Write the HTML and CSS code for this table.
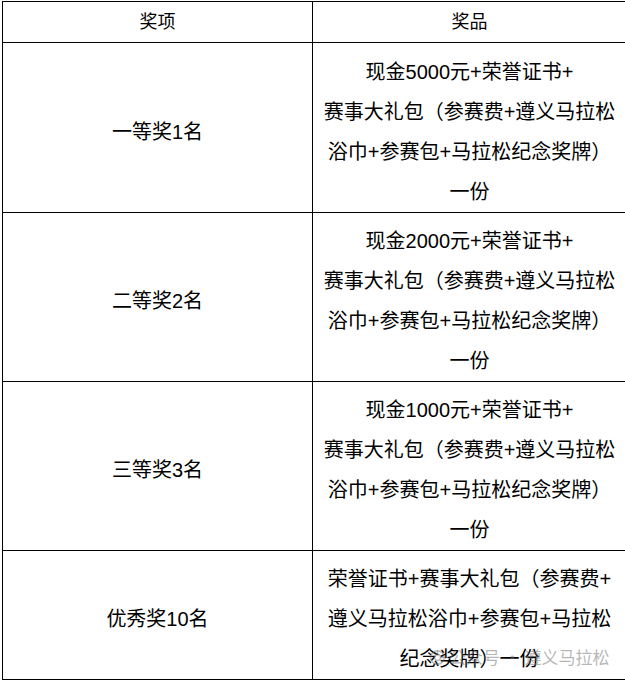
FILE: index.html
```html
<!DOCTYPE html>
<html lang="zh">
<head>
<meta charset="utf-8">
<link rel="stylesheet" href="styles.css">
</head>
<body>
<div class="page">
  <table class="prize">
    <colgroup><col class="c-left"><col class="c-right"></colgroup>
    <thead>
      <tr class="r-head"><th>奖项</th><th>奖品</th></tr>
    </thead>
    <tbody>
      <tr class="r-1">
        <td class="name">一等奖1名</td>
        <td class="gift">现金5000元+荣誉证书+<br>赛事大礼包（参赛费+遵义马拉松<br>浴巾+参赛包+马拉松纪念奖牌）<br>一份</td>
      </tr>
      <tr class="r-2">
        <td class="name">二等奖2名</td>
        <td class="gift">现金2000元+荣誉证书+<br>赛事大礼包（参赛费+遵义马拉松<br>浴巾+参赛包+马拉松纪念奖牌）<br>一份</td>
      </tr>
      <tr class="r-3">
        <td class="name">三等奖3名</td>
        <td class="gift">现金1000元+荣誉证书+<br>赛事大礼包（参赛费+遵义马拉松<br>浴巾+参赛包+马拉松纪念奖牌）<br>一份</td>
      </tr>
      <tr class="r-4">
        <td class="name">优秀奖10名</td>
        <td class="gift">荣誉证书+赛事大礼包（参赛费+<br>遵义马拉松浴巾+参赛包+马拉松<br>纪念奖牌）一份</td>
      </tr>
    </tbody>
  </table>
  <div class="watermark">
    <svg class="wm-icon" width="15" height="15" viewBox="0 0 16 16">
      <circle cx="8" cy="8" r="7.2" fill="none" stroke="currentColor" stroke-width="1.4"/>
      <circle cx="8" cy="8" r="3.2" fill="none" stroke="currentColor" stroke-width="1.4"/>
      <path d="M8 0.8 V4.8 M15.2 8 H11.2" stroke="currentColor" stroke-width="1.4"/>
    </svg>
    <span>公众号 · 遵义马拉松</span>
  </div>
</div>
</body>
</html>
```

FILE: styles.css
```css
html, body {
  margin: 0;
  padding: 0;
  background: #ffffff;
  overflow: hidden;
}
body {
  width: 625px;
  height: 680px;
  font-family: "Liberation Sans", "Noto Sans CJK SC", sans-serif;
  color: #000000;
}
.page {
  position: relative;
  width: 625px;
  height: 680px;
  padding: 1px 0 0 2px;
  box-sizing: border-box;
}
.prize {
  border-collapse: collapse;
  table-layout: fixed;
  width: 624px;
}
.c-left { width: 310px; }
.c-right { width: 314px; }
.prize th, .prize td {
  border: 1px solid #000000;
  text-align: center;
  vertical-align: middle;
  padding: 0;
}
.prize th {
  font-weight: normal;
  font-size: 18px;
  line-height: 24px;
}
.r-head { height: 41px; }
.r-1 { height: 170px; }
.r-2 { height: 168px; }
.r-3 { height: 169px; }
.r-4 { height: 127px; }
.prize td {
  font-size: 20px;
  line-height: 40px;
  padding-top: 8px;
  white-space: nowrap;
}
.watermark {
  position: absolute;
  left: 430px;
  top: 646px;
  display: flex;
  align-items: center;
  gap: 4px;
  color: rgba(110, 110, 110, 0.5);
  font-size: 17px;
  line-height: 22px;
  font-family: "Noto Sans CJK SC", sans-serif;
}
.wm-icon { display: block; }
```
